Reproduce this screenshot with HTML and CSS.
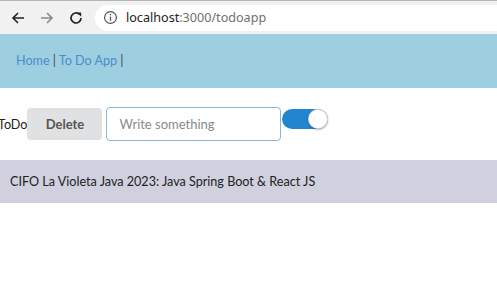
FILE: index.html
```html
<!DOCTYPE html>
<html lang="en">
<head>
    <meta charset="UTF-8">
    <title>To Do App</title>
    <link rel="stylesheet" href="styles.css">
</head>
<body>
    <div class="browser-bar">
        <span class="nav-btn">
            <svg width="16" height="16" viewBox="0 0 16 16"><path d="M14 8H3M8 3L3 8l5 5" fill="none" stroke="#222" stroke-width="1.6"/></svg>
        </span>
        <span class="nav-btn">
            <svg width="16" height="16" viewBox="0 0 16 16"><path d="M2 8h11M8 3l5 5-5 5" fill="none" stroke="#8a8a8a" stroke-width="1.6"/></svg>
        </span>
        <span class="nav-btn">
            <svg width="16" height="16" viewBox="0 0 16 16"><path d="M13 8a5 5 0 1 1-1.6-3.7" fill="none" stroke="#222" stroke-width="1.7"/><path d="M9 2.5h4.2v4.2z" fill="#222"/></svg>
        </span>
        <div class="address">
            <svg width="15" height="15" viewBox="0 0 16 16"><circle cx="8" cy="8" r="6.3" fill="none" stroke="#555" stroke-width="1.3"/><path d="M8 7v4.5" stroke="#555" stroke-width="1.4"/><circle cx="8" cy="4.9" r="0.9" fill="#555"/></svg>
            <span class="url"><span class="host">localhost</span>:3000/todoapp</span>
        </div>
    </div>

    <nav class="top-menu">
        <a href="#" class="menu-link">Home</a> | <a href="#" class="menu-link">To Do App</a> |
    </nav>

    <div class="todo-row">
        <span class="todo-label">ToDo</span>
        <button class="btn-delete">Delete</button>
        <input class="todo-input" type="text" placeholder="Write something">
        <span class="toggle"><span class="knob"></span></span>
    </div>

    <footer class="footer">CIFO La Violeta Java 2023: Java Spring Boot &amp; React JS</footer>
</body>
</html>
```

FILE: styles.css
```css
body {
    margin: 0;
    font-family: Lato, "Noto Sans", sans-serif;
    font-size: 12.6px;
    color: #222;
    background: #fff;
}

.browser-bar {
    background: #f1f1f1;
    border-top: 1px solid #b5b5b5;
    box-sizing: border-box;
    height: 34px;
    display: flex;
    align-items: center;
    padding-left: 3px;
}

.nav-btn {
    width: 29px;
    display: flex;
    justify-content: center;
}

.address {
    margin-left: 5px;
    flex: 1;
    height: 26px;
    background: #fff;
    border-radius: 13px 0 0 13px;
    display: flex;
    align-items: center;
    padding-left: 8px;
    gap: 8px;
}

.url {
    font-family: "Noto Sans", sans-serif;
    font-size: 12.6px;
    color: #6f6f6f;
}

.host {
    color: #222;
}

.top-menu {
    height: 54px;
    line-height: 54px;
    background: #9ecfe0;
    padding-left: 16px;
    color: #3a4a55;
}

.menu-link {
    color: #4a8ccc;
    text-decoration: none;
}

.todo-row {
    display: flex;
    align-items: center;
    margin-top: 19px;
    height: 34px;
}

.todo-label {
    margin-left: -2px;
}

.btn-delete {
    width: 75px;
    height: 32px;
    border: none;
    border-radius: 4px;
    background: #e0e1e2;
    color: #555;
    font-family: Lato, "Noto Sans", sans-serif;
    font-size: 13px;
    font-weight: bold;
}

.todo-input {
    margin-left: 4px;
    width: 175px;
    height: 34px;
    box-sizing: border-box;
    border: 1px solid #85b7d9;
    border-radius: 4px;
    padding: 0 12px;
    font-family: Lato, "Noto Sans", sans-serif;
    font-size: 13px;
    outline: none;
}

.todo-input::placeholder {
    color: #8a8a8a;
}

.toggle {
    position: relative;
    margin-left: 1px;
    margin-top: -11px;
    width: 46px;
    height: 20px;
    border-radius: 10px;
    background: #2185d0;
}

.knob {
    position: absolute;
    right: 0;
    top: 0;
    width: 20px;
    height: 20px;
    border-radius: 50%;
    background: #fff;
    box-shadow: 0 1px 2px rgba(0, 0, 0, 0.3), inset 0 0 0 1px rgba(34, 36, 38, 0.15);
}

.footer {
    margin-top: 19px;
    height: 43px;
    background: #d0d0de;
    display: flex;
    align-items: center;
    padding-left: 10px;
    color: #222;
}
```
